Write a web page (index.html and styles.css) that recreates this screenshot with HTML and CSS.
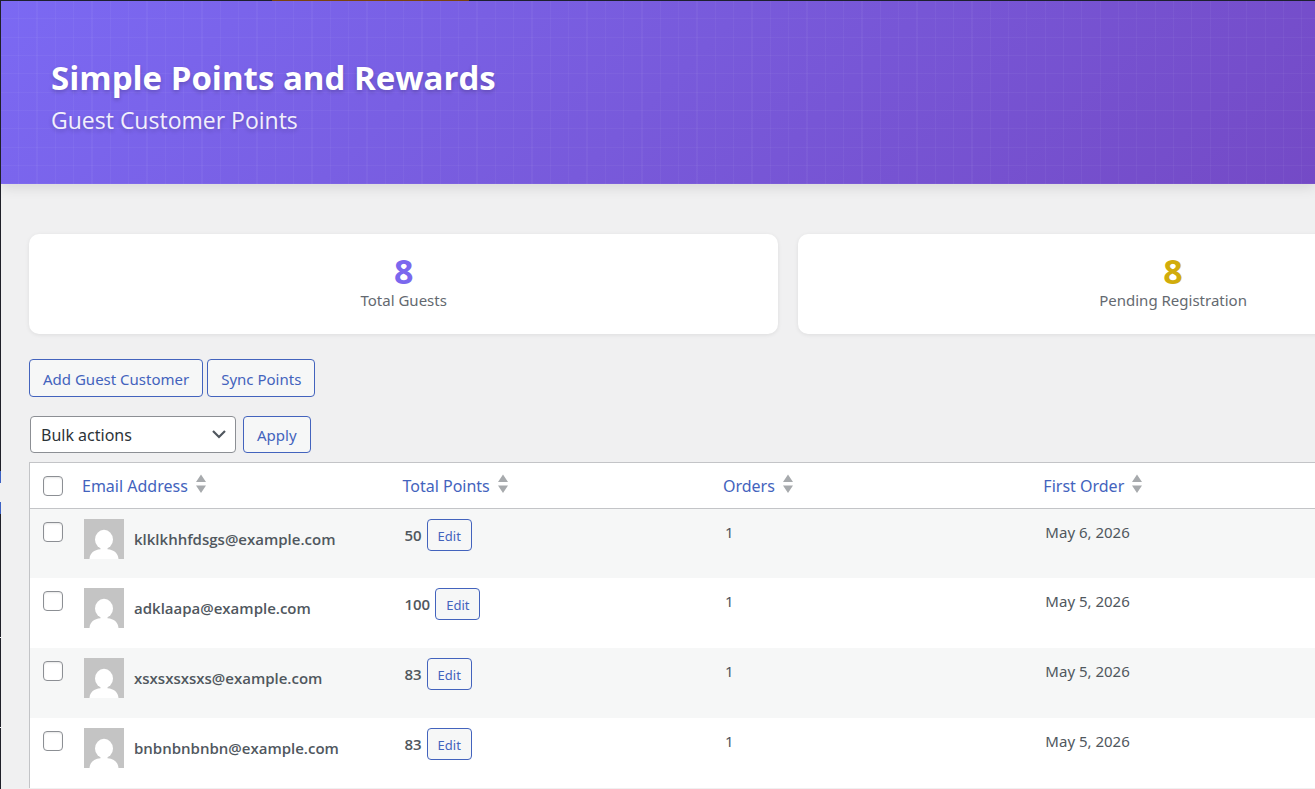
FILE: index.html
```html
<!DOCTYPE html>
<html lang="en">
<head>
<meta charset="utf-8">
<title>Guest Customer Points</title>
<link rel="stylesheet" href="styles.css">
</head>
<body>
<svg class="defs" aria-hidden="true">
  <symbol id="avatar" viewBox="0 0 40 40"><path fill="#c4c4c4" d="M0 0h40v40H0z"/><ellipse cx="20" cy="20.500" rx="9" ry="9.700" fill="#fff"/><path fill="#fff" d="M16.500 27h7v3.300c6.500.5 10.500 3.700 11 9.700h-29c.5-6 4.500-9.200 11-9.700z"/></symbol>
  <symbol id="sort" viewBox="0 0 12 20"><path fill="#a7aaad" d="M6 0.500l5 7.500H1zM1 11.500h10l-5 7.500z"/></symbol>
</svg>
<div class="topbar"><span class="topbar-mark"></span></div>
<div class="shell">
  <div class="rail"><span class="rail-a"></span><span class="rail-blue"></span><span class="rail-gap"></span><span class="rail-blue"></span><span class="rail-b"></span><span class="rail-line"></span><span class="rail-c"></span><span class="rail-line"></span><span class="rail-d"></span></div>
  <main class="page">
    <header class="hero">
      <h1>Simple Points and Rewards</h1>
      <p>Guest Customer Points</p>
    </header>
    <div class="content">
      <section class="cards">
        <div class="card"><strong class="num">8</strong><span>Total Guests</span></div>
        <div class="card"><strong class="num pending">8</strong><span>Pending Registration</span></div>
      </section>
      <div class="actions">
        <button class="btn" type="button">Add Guest Customer</button>
        <button class="btn" type="button">Sync Points</button>
      </div>
      <form class="bulk">
        <span class="select-wrap">
          <select aria-label="Bulk actions"><option>Bulk actions</option></select>
          <svg class="chevron" viewBox="0 0 14 9" aria-hidden="true"><path d="M1 1l6 6 6-6" fill="none" stroke="#50575e" stroke-width="2.200"/></svg>
        </span>
        <button class="btn apply" type="button">Apply</button>
      </form>
      <table>
        <thead>
          <tr>
            <th class="check"><input type="checkbox" aria-label="Select all"></th>
            <th><a href="#">Email Address <svg class="sort"><use href="#sort"/></svg></a></th>
            <th><a href="#">Total Points <svg class="sort"><use href="#sort"/></svg></a></th>
            <th><a href="#">Orders <svg class="sort"><use href="#sort"/></svg></a></th>
            <th><a href="#">First Order <svg class="sort"><use href="#sort"/></svg></a></th>
          </tr>
        </thead>
        <tbody>
          <tr>
            <td class="check"><input type="checkbox" aria-label="Select klklkhhfdsgs@example.com"></td>
            <td><div class="user"><svg class="avatar"><use href="#avatar"/></svg><strong>klklkhhfdsgs@example.com</strong></div></td>
            <td><div class="points"><strong>50</strong><button class="btn edit" type="button">Edit</button></div></td>
            <td>1</td><td>May 6, 2026</td>
          </tr>
          <tr>
            <td class="check"><input type="checkbox" aria-label="Select adklaapa@example.com"></td>
            <td><div class="user"><svg class="avatar"><use href="#avatar"/></svg><strong>adklaapa@example.com</strong></div></td>
            <td><div class="points"><strong>100</strong><button class="btn edit" type="button">Edit</button></div></td>
            <td>1</td><td>May 5, 2026</td>
          </tr>
          <tr>
            <td class="check"><input type="checkbox" aria-label="Select xsxsxsxsxs@example.com"></td>
            <td><div class="user"><svg class="avatar"><use href="#avatar"/></svg><strong>xsxsxsxsxs@example.com</strong></div></td>
            <td><div class="points"><strong>83</strong><button class="btn edit" type="button">Edit</button></div></td>
            <td>1</td><td>May 5, 2026</td>
          </tr>
          <tr>
            <td class="check"><input type="checkbox" aria-label="Select bnbnbnbnbn@example.com"></td>
            <td><div class="user"><svg class="avatar"><use href="#avatar"/></svg><strong>bnbnbnbnbn@example.com</strong></div></td>
            <td><div class="points"><strong>83</strong><button class="btn edit" type="button">Edit</button></div></td>
            <td>1</td><td>May 5, 2026</td>
          </tr>
        </tbody>
      </table>
    </div>
  </main>
</div>
</body>
</html>
```
FILE: styles.css
```css
* { box-sizing: border-box; }
body {
  margin: 0;
  height: 100vh;
  overflow: hidden;
  display: flex;
  flex-direction: column;
  background: #f0f0f1;
  color: #50575e;
  font: 15px/24px "Noto Sans", "Open Sans", sans-serif;
}
.defs { display: none; }
.topbar { height: 1px; flex: none; background: #1d2030; display: flex; }
.topbar-mark { width: 15%; margin-left: 272px; background: #7a4210; }
.shell { display: flex; flex: 1; min-height: 0; }
.rail { width: 1px; flex: none; display: flex; flex-direction: column; background: #1f2029; }
.rail-a { height: 470px; }
.rail-blue { height: 12px; background: #3d62c4; }
.rail-gap { height: 19px; background: #f0f0f1; }
.rail-b { height: 123px; }
.rail-line { height: 1px; background: #f0f0f1; }
.rail-c { height: 89px; }
.rail-d { flex: 1; }
.page { flex: 1; min-width: 0; overflow: hidden; }
.hero {
  padding: 54px 50px 45px;
  color: #fff;
  background:
    repeating-linear-gradient(90deg, transparent 0 1.3%, rgba(255, 255, 255, .04) 1.3% 1.395%),
    repeating-linear-gradient(180deg, transparent 0 9.4%, rgba(255, 255, 255, .04) 9.4% 10.020%),
    linear-gradient(135deg, #7b69f3 0%, #785adb 50%, #744ac6 100%);
  box-shadow: 0 4px 12px rgba(0, 0, 0, .1);
  text-shadow: 0 2px 4px rgba(0, 0, 0, .2);
}
.hero h1 { margin: 0; font-family: "Open Sans", sans-serif; font-size: 33px; line-height: 46px; font-weight: 700; }
.hero p { margin: 0; font-family: "Open Sans", sans-serif; font-size: 23px; line-height: 38px; opacity: .9; }
.content { padding: 50px 0 0 28px; }
.cards { display: flex; gap: 20px; width: 118.100%; }
.card {
  flex: 1;
  display: flex;
  flex-direction: column;
  align-items: center;
  padding: 20px 20px 22px;
  background: #fff;
  border-radius: 10px;
  box-shadow: 0 1px 4px rgba(0, 0, 0, .08);
  color: #646970;
}
.num { font-size: 34px; line-height: 34px; color: #7b68ee; }
.pending { color: #d1ac0b; }
.actions { display: flex; gap: 4px; margin-top: 25px; }
.btn {
  height: 38px;
  padding: 1px 13px 0;
  border: 1px solid #4363bd;
  border-radius: 4px;
  background: #f6f7f7;
  color: #4363bd;
  font: inherit;
}
.bulk { display: flex; gap: 7px; margin: 19px 0 0 1px; }
.select-wrap { position: relative; width: 206px; }
select {
  appearance: none;
  width: 100%;
  height: 37px;
  padding: 1px 10px 0;
  border: 1px solid #8c8f94;
  border-radius: 4px;
  background: #fff;
  color: #2c3338;
  font: inherit;
  font-size: 16px;
}
.chevron { position: absolute; right: 10px; top: 14px; width: 14px; height: 9px; pointer-events: none; }
.apply { height: 37px; padding: 0 13px; }
table {
  width: 103.100%;
  margin-top: 9px;
  table-layout: fixed;
  border-collapse: separate;
  border-spacing: 0;
  border: 1px solid #c3c4c7;
  border-bottom: 0;
  background: #fff;
}
th, td { padding: 0 12px; text-align: left; vertical-align: top; }
.check { width: 42px; padding: 13px 0 0 13px; }
thead th { height: 46px; padding-left: 10px; border-bottom: 1px solid #c3c4c7; font-weight: 400; vertical-align: middle; }
thead .check { padding: 0 0 0 13px; }
th a { display: flex; align-items: center; gap: 7px; color: #4363bd; font-size: 16px; text-decoration: none; }
.sort { width: 12px; height: 20px; margin-bottom: 3px; }
tbody td { height: 70px; padding-top: 10px; line-height: 26px; }
tbody tr:first-child td { height: 69px; }
tbody .check { padding-top: 13px; line-height: 0; }
tbody tr:nth-child(odd) { background: #f6f7f7; }
input[type="checkbox"] {
  appearance: none;
  display: block;
  width: 20px;
  height: 20px;
  margin: 0;
  border: 1px solid #8c8f94;
  border-radius: 4px;
  background: #fff;
  box-shadow: inset 0 1px 2px rgba(0, 0, 0, .1);
}
.user { display: flex; align-items: center; gap: 10px; }
.user strong, .points strong { font-family: "Open Sans", sans-serif; font-weight: 600; }
.avatar { width: 40px; height: 40px; }
.points { display: flex; align-items: center; gap: 5px; }
.edit { height: 32px; padding: 1px 10px 0; font-size: 13px; }
```
